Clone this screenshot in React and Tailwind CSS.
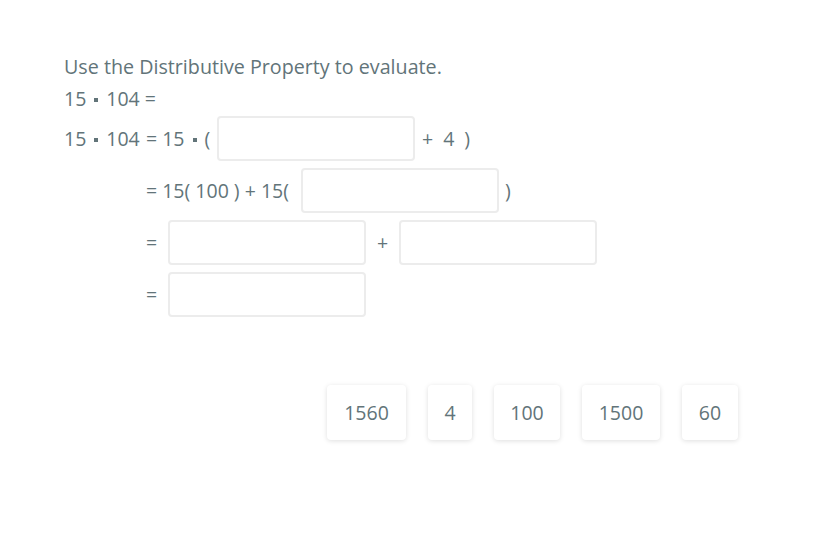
import React from 'react';

const Dot = () => (
  <span className="inline-block w-[4px] h-[4px] bg-[#627479] mx-[8px] relative top-[1px]"></span>
);

const Blank = ({ w = 'w-[198px]' }) => (
  <div className={`${w} h-[45px] border-2 border-[#ececec] rounded-[4px] bg-white shrink-0`}></div>
);

const tiles = [
  { v: '1560', w: 'w-[79px]' },
  { v: '4', w: 'w-[44px]' },
  { v: '100', w: 'w-[66px]' },
  { v: '1500', w: 'w-[78px]' },
  { v: '60', w: 'w-[56px]' },
];

export default function App() {
  return (
    <div className="min-h-[556px] bg-white text-[#627479] font-['Open_Sans','Noto_Sans',sans-serif] pl-[64px] pt-[53px]">
      <p className="text-[19.7px] leading-[28px]">Use the Distributive Property to evaluate.</p>
      <p className="text-[19.5px] leading-[26px] mt-[5px] flex items-center">
        15<Dot />104 =
      </p>

      <div className="mt-[4px] flex flex-col gap-[7px] text-[19.5px]">
        <div className="flex items-center h-[45px]">
          <span className="w-[82px] flex items-center">15<Dot />104</span>
          <span className="w-[71px] flex items-center">= 15<Dot />(</span>
          <Blank />
          <span className="ml-[7px] flex gap-[10px]">
            <span>+</span>
            <span>4</span>
            <span>)</span>
          </span>
        </div>

        <div className="flex items-center h-[45px] pl-[82px]">
          <span className="w-[155px] whitespace-pre">= 15( 100 ) + 15( </span>
          <Blank />
          <span className="ml-[6px]">)</span>
        </div>

        <div className="flex items-center h-[45px] pl-[82px]">
          <span className="w-[22px]">=</span>
          <Blank />
          <span className="w-[33px] text-center">+</span>
          <Blank />
        </div>

        <div className="flex items-center h-[45px] pl-[82px]">
          <span className="w-[22px]">=</span>
          <Blank />
        </div>
      </div>

      <div className="flex gap-[22px] ml-[263px] mt-[68px]">
        {tiles.map((t) => (
          <div
            key={t.v}
            className={`${t.w} h-[55px] flex items-center justify-center bg-white rounded-[4px] text-[19.5px] shadow-[0_1px_5px_rgba(0,0,0,0.13)]`}
          >
            {t.v}
          </div>
        ))}
      </div>
    </div>
  );
}
